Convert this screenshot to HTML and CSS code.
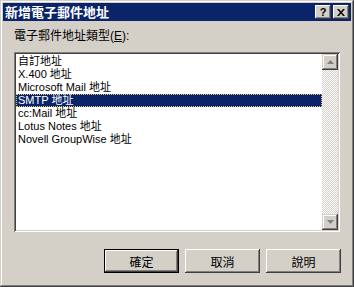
FILE: index.html
```html
<!DOCTYPE html>
<html lang="zh-Hant">
<head>
  <meta charset="UTF-8" />
  <title>新增電子郵件地址</title>
  <link rel="stylesheet" href="styles.css">
</head>
<body>
<div class="dlg">
  <div class="titlebar">
    <span class="title">新增電子郵件地址</span>
    <span class="tbtn help">?</span>
    <span class="tbtn close">
      <svg width="8" height="7" viewBox="0 0 8 7"><path d="M0 0h2l2 2.5L6 0h2L5 3.5 8 7H6L4 4.5 2 7H0l3-3.5z" fill="#000"/></svg>
    </span>
  </div>
  <div class="body">
    <div class="label">電子郵件地址類型(<u>E</u>):</div>
    <div class="listbox">
      <ul class="items">
        <li>自訂地址</li>
        <li>X.400 地址</li>
        <li>Microsoft Mail 地址</li>
        <li class="sel">SMTP 地址</li>
        <li>cc:Mail 地址</li>
        <li>Lotus Notes 地址</li>
        <li>Novell GroupWise 地址</li>
      </ul>
      <div class="scrollbar">
        <div class="sbtn">
          <svg width="7" height="4" viewBox="0 0 7 4"><path d="M3.5 0L7 4H0z" fill="#808080"/></svg>
        </div>
        <div class="track"></div>
        <div class="sbtn">
          <svg width="7" height="4" viewBox="0 0 7 4"><path d="M0 0h7L3.5 4z" fill="#808080"/></svg>
        </div>
      </div>
    </div>
    <div class="buttons">
      <button class="btn default">確定</button>
      <button class="btn">取消</button>
      <button class="btn">說明</button>
    </div>
  </div>
</div>
</body>
</html>
```

FILE: styles.css
```css
* {
  margin: 0;
  padding: 0;
  box-sizing: border-box;
}
html, body {
  width: 354px;
  height: 287px;
  overflow: hidden;
  background: #d4d0c8;
  font-family: "Liberation Sans", "Noto Sans CJK TC", sans-serif;
  font-size: 11px;
  color: #000;
}
.dlg {
  width: 354px;
  height: 287px;
  padding: 3px;
  background: #d4d0c8;
  box-shadow: inset -1px -1px #404040, inset 1px 1px #d4d0c8, inset -2px -2px #808080, inset 2px 2px #fff;
}
.titlebar {
  height: 18px;
  background: #0a246a;
  display: flex;
  align-items: center;
  padding: 0 2px 0 2px;
}
.title {
  flex: 1;
  color: #fff;
  font-family: "Noto Sans CJK TC", sans-serif;
  font-weight: bold;
  font-size: 13px;
  line-height: 18px;
}
.tbtn {
  width: 16px;
  height: 14px;
  background: #d4d0c8;
  box-shadow: inset -1px -1px #404040, inset 1px 1px #fff, inset -2px -2px #808080, inset 2px 2px #d4d0c8;
  display: flex;
  align-items: center;
  justify-content: center;
  font-family: "Liberation Sans", sans-serif;
  font-weight: bold;
  font-size: 11px;
  line-height: 14px;
}
.help {
  margin-right: 2px;
}
.close svg {
  display: block;
}
.body {
  padding: 0 10px 0 11px;
}
.label {
  margin-top: 8px;
  line-height: 14px;
  font-size: 12px;
}
.label u {
  text-decoration: underline;
}
.listbox {
  margin-top: 9px;
  width: 326px;
  height: 180px;
  background: #fff;
  display: flex;
  padding: 2px;
  box-shadow: inset 1px 1px #808080, inset -1px -1px #fff, inset 2px 2px #404040, inset -2px -2px #d4d0c8;
}
.items {
  flex: 1;
  list-style: none;
  padding-top: 1px;
}
.items li {
  height: 13px;
  line-height: 13px;
  padding-left: 2px;
  white-space: nowrap;
}
.items li.sel {
  background: #0a246a;
  color: #fff;
  outline: 1px dotted #e8c870;
  outline-offset: -1px;
}
.scrollbar {
  width: 16px;
  display: flex;
  flex-direction: column;
}
.sbtn {
  height: 16px;
  background: #d4d0c8;
  box-shadow: inset -1px -1px #404040, inset 1px 1px #d4d0c8, inset -2px -2px #808080, inset 2px 2px #fff;
  display: flex;
  align-items: center;
  justify-content: center;
}
.sbtn svg {
  display: block;
}
.track {
  flex: 1;
  background: repeating-conic-gradient(#d4d0c8 0 25%, #fff 0 50%) 0 0 / 2px 2px;
}
.buttons {
  margin-top: 17px;
  display: flex;
  justify-content: flex-end;
  gap: 6px;
}
.btn {
  width: 75px;
  height: 24px;
  border: none;
  background: #d4d0c8;
  font-family: "Noto Sans CJK TC", sans-serif;
  font-size: 12px;
  color: #000;
  box-shadow: inset -1px -1px #404040, inset 1px 1px #fff, inset -2px -2px #808080, inset 2px 2px #d4d0c8;
}
.btn.default {
  box-shadow: inset 0 0 0 1px #000, inset -2px -2px #404040, inset 2px 2px #fff, inset -3px -3px #808080;
}
```
